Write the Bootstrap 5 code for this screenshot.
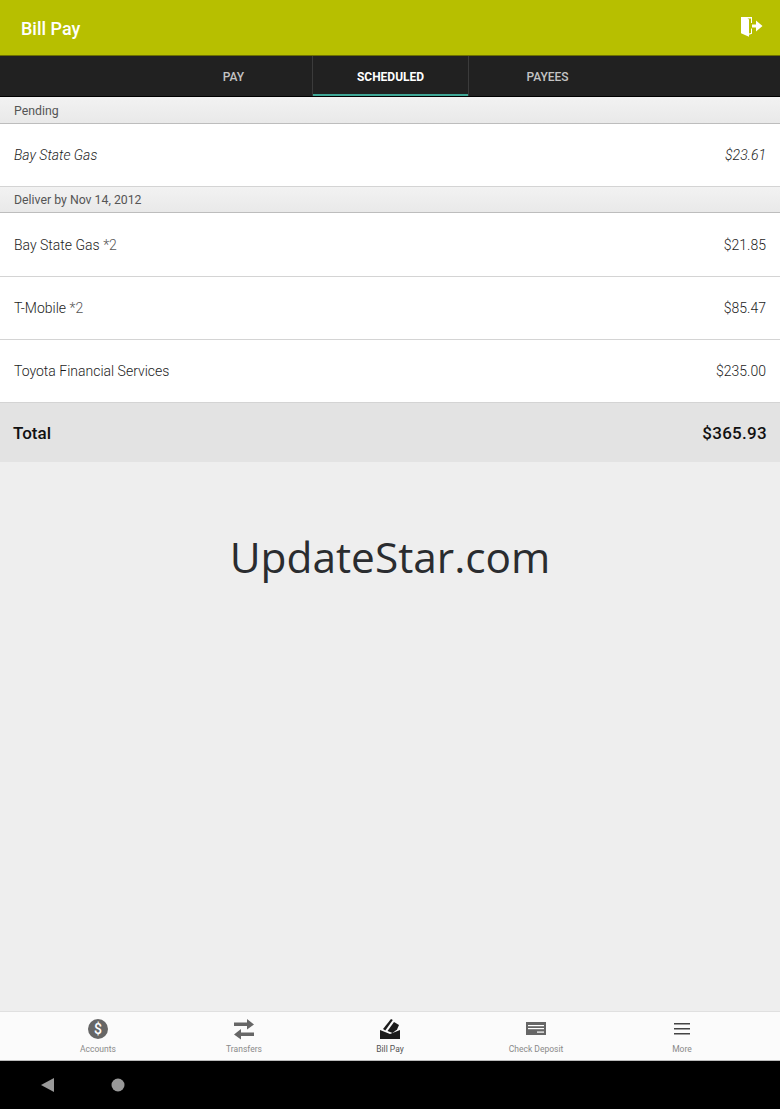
<!DOCTYPE html>
<html lang="en">
<head>
    <meta charset="UTF-8">
    <meta name="viewport" content="width=device-width, initial-scale=1.0">
    <title>Bill Pay</title>
    <link href="https://cdn.jsdelivr.net/npm/bootstrap@5.3.0/dist/css/bootstrap.min.css" rel="stylesheet">
    <style>
        html, body {
            height: 100%;
        }
        body {
            background-color: #eeeeee;
            font-family: Roboto, "Liberation Sans", sans-serif;
            color: #222;
        }
        .app-shell {
            height: 1109px;
        }
        .top-bar {
            height: 56px;
            background-color: #b7bf00;
            padding: 2px 16px 0 21px;
            border-bottom: 1px solid #6d7000;
        }
        .top-title {
            font-size: 18px;
            font-weight: 500;
            color: #fff;
        }
        .tab-strip {
            height: 41px;
            background-color: #212121;
            border-bottom: 1px solid #000;
            padding-left: 1px;
        }
        .tab-item {
            width: 157px;
            font-size: 12px;
            font-weight: 500;
            color: #c4c4c4;
            text-align: center;
            line-height: 43px;
        }
        .tab-item.is-active {
            color: #fff;
            font-weight: 700;
            border-left: 1px solid #3b3b3b;
            border-right: 1px solid #3b3b3b;
            box-shadow: inset 0 -2px 0 #3fa796;
        }
        .group-head {
            height: 27px;
            padding: 2px 14px 0;
            font-size: 12.3px;
            color: #555;
            background: linear-gradient(#f2f2f2, #e9e9e9);
            border-bottom: 1px solid #bdbdbd;
        }
        .group-head.is-tight {
            height: 26px;
        }
        .pay-row {
            height: 63px;
            padding: 0 14px;
            font-size: 14px;
            font-weight: 300;
            color: #1c1c1c;
            background-color: #fff;
            border-bottom: 1px solid #d4d4d4;
        }
        .pay-row.is-tall {
            height: 64px;
            padding-top: 1px;
        }
        .pay-row:last-of-type {
            border-bottom-color: #aaa;
        }
        .pay-note {
            color: #555;
        }
        .total-row {
            height: 59px;
            padding: 2px 13px 0;
            font-size: 17px;
            font-weight: 500;
            color: #111;
            background-color: #e3e3e3;
        }
        .total-sum {
            letter-spacing: .3px;
        }
        .stamp-text {
            padding-top: 67px;
            font-family: "Open Sans", "Liberation Sans", sans-serif;
            font-size: 42.4px;
            line-height: 56px;
            color: #2a2c2f;
        }
        .bottom-nav {
            height: 50px;
            padding: 0 25px;
            background-color: #fbfbfb;
            border-top: 1px solid #e0e0e0;
            border-bottom: 1px solid #bbb;
        }
        .nav-cell {
            width: 146px;
            font-size: 8.5px;
            color: #8a8a8a;
            padding-top: 6px;
        }
        .nav-cell svg {
            display: block;
            margin-bottom: 3px;
        }
        .nav-cell.is-current {
            color: #555;
        }
        .system-bar {
            height: 48px;
            background-color: #000;
            padding-left: 41px;
            gap: 56px;
        }
    </style>
</head>
<body>
    <div class="app-shell d-flex flex-column">
        <!-- Title bar -->
        <header class="top-bar d-flex align-items-center justify-content-between flex-shrink-0">
            <span class="top-title">Bill Pay</span>
            <svg width="24" height="24" viewBox="0 0 24 24" fill="#fff" class="mb-1">
                <path d="M1 2h11v6h-1v-4.500h-3.500l1.500 1v14l2-.6v-4.400h1v5.300l-3 .9v2l-8-3.500z"/>
                <path d="M12 9.500h4v-4l6.500 5.500-6.500 5.500v-4h-4z"/>
            </svg>
        </header>

        <!-- Tabs -->
        <nav class="tab-strip d-flex justify-content-center flex-shrink-0">
            <div class="tab-item">PAY</div>
            <div class="tab-item is-active">SCHEDULED</div>
            <div class="tab-item">PAYEES</div>
        </nav>

        <!-- Payments -->
        <section class="flex-shrink-0">
            <div class="group-head d-flex align-items-center">Pending</div>
            <div class="pay-row d-flex align-items-center justify-content-between fst-italic">
                <span>Bay State Gas</span>
                <span>$23.61</span>
            </div>
            <div class="group-head is-tight d-flex align-items-center">Deliver by Nov 14, 2012</div>
            <div class="pay-row is-tall d-flex align-items-center justify-content-between">
                <span>Bay State Gas <span class="pay-note">*2</span></span>
                <span>$21.85</span>
            </div>
            <div class="pay-row d-flex align-items-center justify-content-between">
                <span>T-Mobile <span class="pay-note">*2</span></span>
                <span>$85.47</span>
            </div>
            <div class="pay-row d-flex align-items-center justify-content-between">
                <span>Toyota Financial Services</span>
                <span>$235.00</span>
            </div>
            <div class="total-row d-flex align-items-center justify-content-between">
                <span>Total</span>
                <span class="total-sum">$365.93</span>
            </div>
        </section>

        <main class="flex-grow-1">
            <div class="stamp-text text-center">UpdateStar.com</div>
        </main>

        <!-- Bottom navigation -->
        <nav class="bottom-nav d-flex flex-shrink-0">
            <div class="nav-cell d-flex flex-column align-items-center">
                <svg width="22" height="22" viewBox="0 0 22 22">
                    <circle cx="11" cy="11" r="10" fill="#666"/>
                    <text x="11" y="16" text-anchor="middle" font-size="14" font-weight="500" fill="#fff" font-family="Roboto, sans-serif">$</text>
                </svg>
                <span>Accounts</span>
            </div>
            <div class="nav-cell d-flex flex-column align-items-center">
                <svg width="22" height="22" viewBox="0 0 22 22" fill="#666">
                    <path d="M1 5h13v-3.500l7 5.500-7 5v-3.500h-13z" transform="translate(0 -0.500)"/>
                    <path d="M21 14h-13v-3.500l-7 5.500 7 5v-3.500h13z" transform="translate(0 0.500)"/>
                </svg>
                <span>Transfers</span>
            </div>
            <div class="nav-cell is-current d-flex flex-column align-items-center">
                <svg width="22" height="22" viewBox="0 0 22 22" fill="#1c1c1c">
                    <path d="M1 21v-9l10 4 10-4v9z"/>
                    <path d="M4 11l8-10 1.800 1-7.500 10.500z"/>
                    <path d="M8.500 13l6.500-9 5 3-2 4.500-4.500 3.500z"/>
                </svg>
                <span>Bill Pay</span>
            </div>
            <div class="nav-cell d-flex flex-column align-items-center">
                <svg width="22" height="22" viewBox="0 0 22 22">
                    <rect x="1" y="4" width="20" height="13" fill="#666"/>
                    <rect x="3" y="7" width="16" height="1.200" fill="#fff"/>
                    <rect x="3" y="10" width="16" height="1.200" fill="#fff"/>
                    <rect x="12" y="13.500" width="7" height="1.200" fill="#fff"/>
                </svg>
                <span>Check Deposit</span>
            </div>
            <div class="nav-cell d-flex flex-column align-items-center">
                <svg width="22" height="22" viewBox="0 0 22 22" fill="#444">
                    <rect x="3" y="5" width="16" height="1.500"/>
                    <rect x="3" y="10" width="16" height="1.500"/>
                    <rect x="3" y="15" width="16" height="1.500"/>
                </svg>
                <span>More</span>
            </div>
        </nav>

        <!-- Android system bar -->
        <footer class="system-bar d-flex align-items-center flex-shrink-0">
            <svg width="14" height="14" viewBox="0 0 14 14" fill="#999"><path d="M0 7l13-7v14z"/></svg>
            <svg width="14" height="14" viewBox="0 0 14 14" fill="#999"><circle cx="7" cy="7" r="6.500"/></svg>
        </footer>
    </div>

    <script src="https://cdn.jsdelivr.net/npm/bootstrap@5.3.0/dist/js/bootstrap.bundle.min.js"></script>
</body>
</html>
